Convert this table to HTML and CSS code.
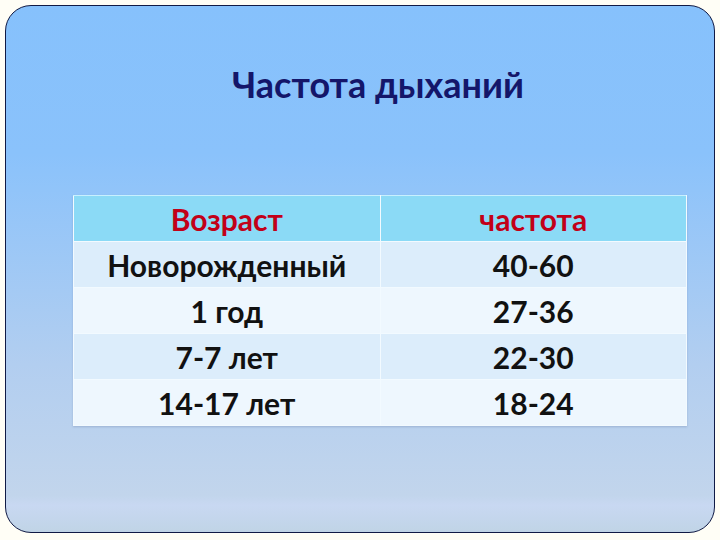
FILE: index.html
```html
<!DOCTYPE html>
<html>
<head>
<meta charset="utf-8">
<link rel="stylesheet" href="styles.css">
</head>
<body>
<div class="page">
  <div class="slide">
    <h1 class="title">Частота дыханий</h1>
    <table class="grid">
      <tr class="head"><td>Возраст</td><td>частота</td></tr>
      <tr class="r1"><td>Новорожденный</td><td>40-60</td></tr>
      <tr class="r2"><td>1 год</td><td>27-36</td></tr>
      <tr class="r1"><td>7-7 лет</td><td>22-30</td></tr>
      <tr class="r2"><td>14-17 лет</td><td>18-24</td></tr>
    </table>
  </div>
</div>
</body>
</html>
```
FILE: styles.css
```css
html, body {
  margin: 0;
  padding: 0;
  background: #fffef6;
}
.page {
  width: 720px;
  height: 540px;
  padding: 5px 0 0 5px;
  box-sizing: border-box;
}
.slide {
  width: 710px;
  height: 528px;
  box-sizing: border-box;
  border: 1px solid #101a45;
  border-radius: 26px;
  background: linear-gradient(to bottom, #86c1fc 0%, #8ac2fb 28%, #b2cef0 68%, #c2d5ec 93%, #c8d8f2 95%, #c0d4e6 100%);
  padding-top: 55px;
  font-family: Lato, "Open Sans", sans-serif;
  font-weight: bold;
}
.title {
  margin: 0 0 0 36px;
  text-align: center;
  font-size: 36px;
  line-height: 46px;
  color: #14166a;
  font-weight: bold;
}
.grid {
  margin: 88px 0 0 67px;
  width: 614px;
  border-collapse: collapse;
  table-layout: fixed;
  box-shadow: 0 1px 2px rgba(100, 120, 160, 0.35);
}
.grid td {
  height: 45px;
  padding: 0;
  text-align: center;
  vertical-align: middle;
  font-size: 30px;
  line-height: 36px;
  color: #111111;
  border: 1px solid #f2faff;
}
.grid .head td {
  background: #8bdaf6;
  color: #c20018;
  border-top-color: #c8f0ff;
}
.grid .r1 td {
  background: #dcedfb;
}
.grid .r2 td {
  background: #eef7fe;
}
```
